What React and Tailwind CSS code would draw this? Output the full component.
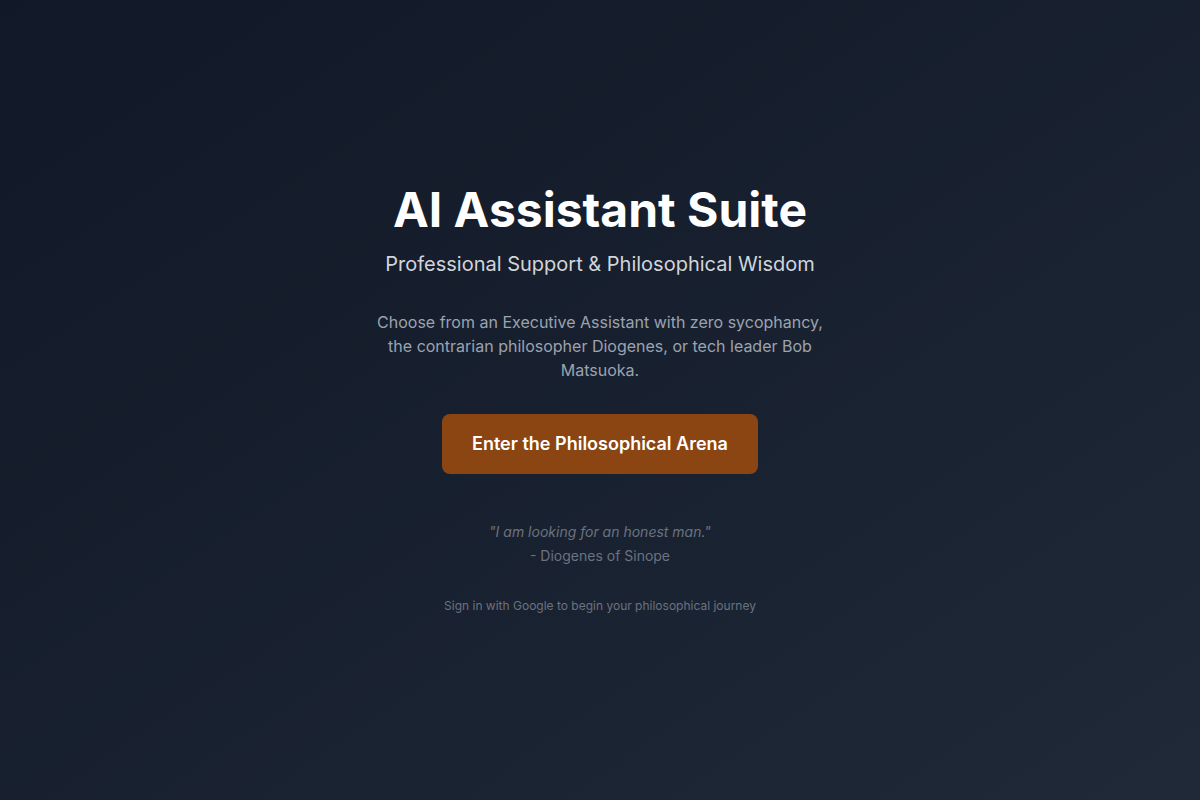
export default function App() {
  return (
    <div
      className="min-h-screen flex items-center justify-center bg-gradient-to-br from-[#111827] to-[#1f2937] text-center"
      style={{ fontFamily: "Inter, 'Noto Sans', sans-serif" }}
    >
      <div className="flex flex-col items-center">
        <h1 className="text-5xl font-bold text-white mb-4">AI Assistant Suite</h1>
        <p className="text-xl text-[#d1d5db] mb-8">Professional Support &amp; Philosophical Wisdom</p>
        <p className="text-base text-[#9ca3af] max-w-md mb-8 leading-6">
          Choose from an Executive Assistant with zero sycophancy, the contrarian philosopher Diogenes, or tech leader Bob Matsuoka.
        </p>
        <button className="bg-[#8b4513] text-white text-lg font-semibold px-[30px] py-4 rounded-lg">
          Enter the Philosophical Arena
        </button>
        <div className="mt-12 text-sm text-[#6b7280]">
          <p className="italic">"I am looking for an honest man."</p>
          <p className="mt-1">- Diogenes of Sinope</p>
        </div>
        <p className="mt-8 text-xs text-[#6b7280]">Sign in with Google to begin your philosophical journey</p>
      </div>
    </div>
  );
}
